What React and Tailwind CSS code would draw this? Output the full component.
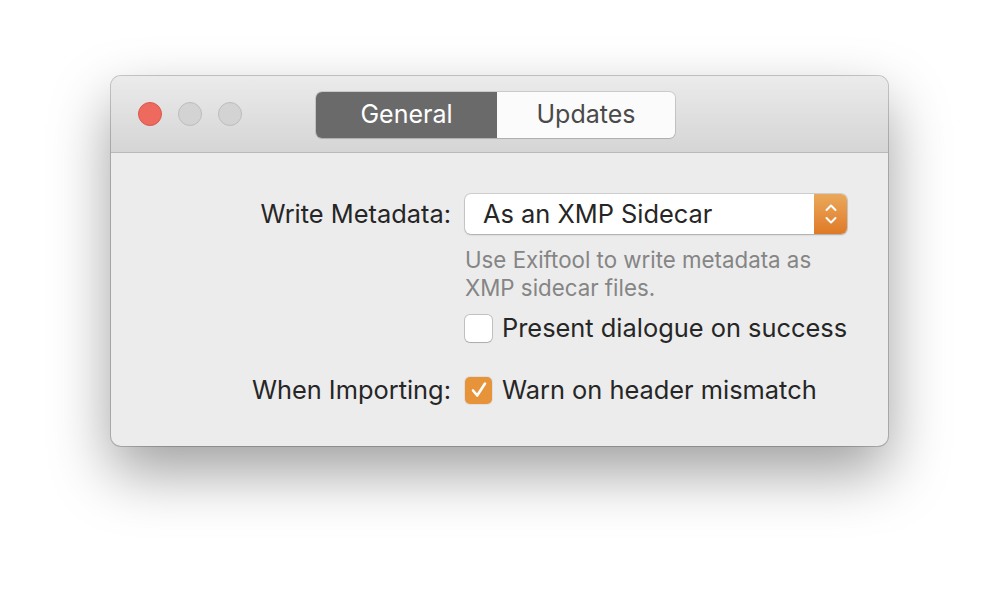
import React from "react";

const font = { fontFamily: "Inter, 'Noto Sans', sans-serif" };

const Chevrons = () => (
  <svg width="14" height="24" viewBox="0 0 14 24" fill="none">
    <path d="M2.5 8 L7 3.5 L11.5 8" stroke="white" strokeWidth="2" strokeLinecap="round" strokeLinejoin="round" />
    <path d="M2.5 16 L7 20.5 L11.5 16" stroke="white" strokeWidth="2" strokeLinecap="round" strokeLinejoin="round" />
  </svg>
);

const Check = () => (
  <svg width="20" height="20" viewBox="0 0 20 20" fill="none">
    <path d="M4 10.5 L8.2 15.5 L16 3.5" stroke="white" strokeWidth="2.6" strokeLinecap="round" strokeLinejoin="round" />
  </svg>
);

const App = () => {
  return (
    <div className="w-[1000px] h-[594px] bg-white pt-[76px] pl-[111px] overflow-hidden" style={font}>
      <div className="w-[777px] h-[370px] rounded-[10px] bg-[#ececec] overflow-hidden shadow-[0_0_0_1px_rgba(0,0,0,0.2),0_26px_60px_rgba(0,0,0,0.38)]">
        {/* Title bar */}
        <div className="h-[77px] bg-gradient-to-b from-[#ebebeb] to-[#d5d5d5] border-b border-[#b9b9b9] flex items-center px-[27px]">
          <div className="flex items-center gap-[16px]">
            <div className="w-[24px] h-[24px] rounded-full bg-[#ee6a5f] border border-[#d9574d]" />
            <div className="w-[24px] h-[24px] rounded-full bg-[#d3d3d3] border border-[#bdbdbd]" />
            <div className="w-[24px] h-[24px] rounded-full bg-[#d3d3d3] border border-[#bdbdbd]" />
          </div>
          <div className="ml-[74px] mt-[1px] flex h-[46px] rounded-[6px] overflow-hidden shadow-[0_0_0_1px_rgba(0,0,0,0.12),0_1px_1px_rgba(0,0,0,0.08)] text-[25px]">
            <div className="w-[181px] bg-[#6a6a6a] text-white flex items-center justify-center">General</div>
            <div className="w-[178px] bg-[#fbfbfb] text-[#4a4a4a] flex items-center justify-center">Updates</div>
          </div>
        </div>

        {/* Body */}
        <div className="pt-[41px] grid grid-cols-[340px_1fr] gap-x-[14px] text-[25.4px] text-[#262626]">
          <div className="h-[40px] flex items-center justify-end">Write Metadata:</div>
          <div className="w-[382px] h-[40px] flex rounded-[6px] bg-white shadow-[0_0_0_1px_rgba(0,0,0,0.12),0_1px_2px_rgba(0,0,0,0.18)] overflow-hidden">
            <div className="flex-1 flex items-center pl-[18px]">As an XMP Sidecar</div>
            <div className="w-[33px] bg-gradient-to-b from-[#eaa85a] to-[#df7a25] flex items-center justify-center">
              <Chevrons />
            </div>
          </div>

          <div />
          <div className="pt-[12px] text-[22.3px] leading-[28px] text-[#858585]">
            Use Exiftool to write metadata as
            <br />
            XMP sidecar files.
          </div>

          <div />
          <div className="mt-[12px] flex items-center gap-[10px] h-[28px]">
            <div className="w-[27px] h-[27px] rounded-[5px] bg-white shadow-[0_0_0_1px_rgba(0,0,0,0.18),0_1px_1px_rgba(0,0,0,0.1)]" />
            <span>Present dialogue on success</span>
          </div>

          <div className="mt-[34px] h-[28px] flex items-center justify-end">When Importing:</div>
          <div className="mt-[34px] flex items-center gap-[10px] h-[28px]">
            <div className="w-[27px] h-[27px] rounded-[5px] bg-[#e6933a] flex items-center justify-center shadow-[0_0_0_1px_rgba(0,0,0,0.06)]">
              <Check />
            </div>
            <span>Warn on header mismatch</span>
          </div>
        </div>
      </div>
    </div>
  );
};

export default App;
